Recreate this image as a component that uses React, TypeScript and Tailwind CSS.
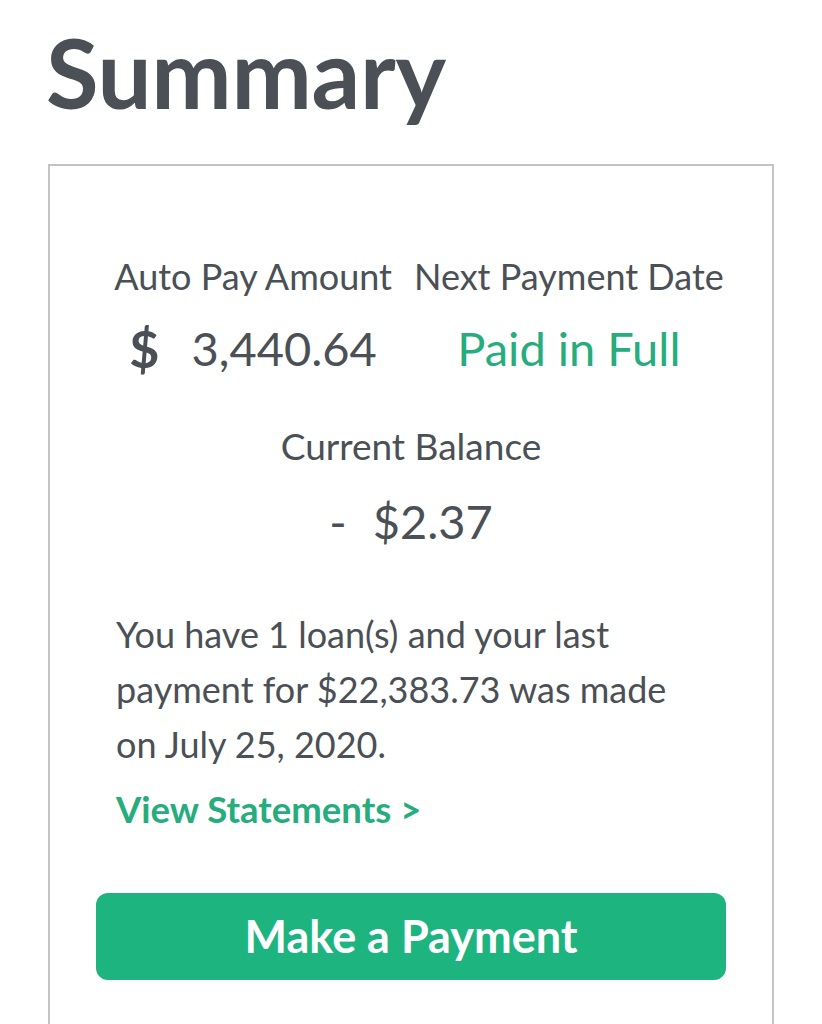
import React from 'react';

const Summary: React.FC = () => {
  return (
    <div className="min-h-screen bg-white font-['Lato',sans-serif] text-[#4a5055] overflow-hidden">
      <h1 className="pl-[46px] pt-[14px] text-[96px] font-bold leading-[1.2] tracking-[-0.3px] text-[#4a5055]">Summary</h1>
      <div className="mx-[48px] mt-[35px] h-[900px] border-2 border-[#c4c4c4] px-[46px]">
        <div className="mt-[89px] flex justify-center gap-[22px] pl-[16px]">
          <div className="flex flex-col items-center">
            <div className="text-[36px] leading-[1.2]">Auto Pay Amount</div>
            <div className="mt-[22px] flex h-[56px] items-center text-[47px] leading-[1.2]">
              <span className="text-[52px] font-bold">$</span>
              <span className="ml-[32px]">3,440.64</span>
            </div>
          </div>
          <div className="flex flex-col items-center">
            <div className="text-[36px] leading-[1.2]">Next Payment Date</div>
            <div className="mt-[22px] h-[56px] text-[47px] leading-[1.2] text-[#27ac7d]">Paid in Full</div>
          </div>
        </div>
        <div className="mt-[48px] flex flex-col items-center">
          <div className="text-[37px] leading-[1.2]">Current Balance</div>
          <div className="mt-[24px] flex items-center text-[47px] leading-[1.2]">
            <span>-</span>
            <span className="ml-[26px]">$2.37</span>
          </div>
        </div>
        <p className="mt-[58px] pl-[20px] text-[36px] leading-[55px]">
          You have 1 loan(s) and your last<br />
          payment for $22,383.73 was made<br />
          on July 25, 2020.
        </p>
        <a className="mt-[12px] block pl-[20px] text-[36.5px] font-bold leading-[1.4] text-[#27ac7d]">View Statements &gt;</a>
        <button className="mt-[58px] h-[87px] w-full rounded-[12px] bg-[#1eb480] text-[45px] font-bold text-white">
          Make a Payment
        </button>
      </div>
    </div>
  );
};

export default function App() {
  return <Summary />;
}
